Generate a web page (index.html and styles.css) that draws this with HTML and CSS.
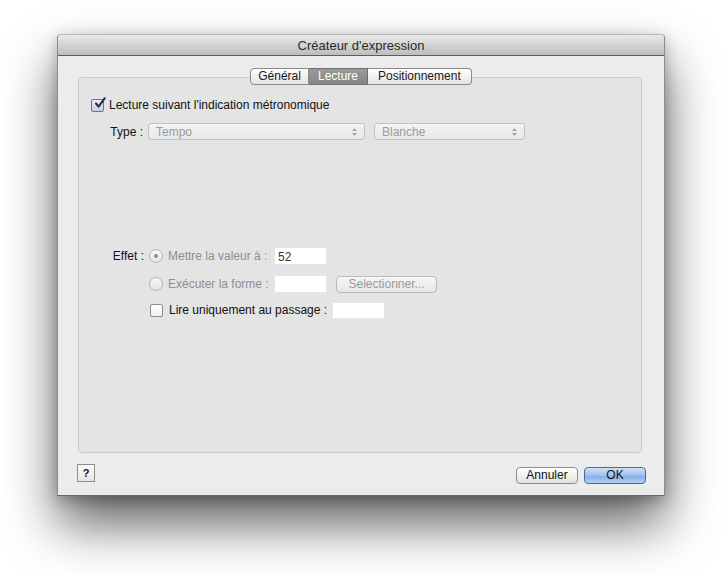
FILE: index.html
```html
<!DOCTYPE html>
<html lang="fr">
<head>
    <meta charset="UTF-8">
    <title>Créateur d'expression</title>
    <link rel="stylesheet" href="styles.css">
</head>
<body>
    <div class="window">
        <div class="titlebar">Créateur d'expression</div>
        <div class="window-body">
            <div class="tabs">
                <span class="tab">Général</span><span class="tab active">Lecture</span><span class="tab">Positionnement</span>
            </div>
            <div class="panel">
                <div class="check-row">
                    <span class="checkbox checked">
                        <svg width="13" height="13" viewBox="0 0 13 13"><path d="M3 6.5 L5.6 9.6 L11.8 1.2" fill="none" stroke="#1d2a44" stroke-width="2" stroke-linecap="round" stroke-linejoin="round"/></svg>
                    </span>
                    <span class="text">Lecture suivant l'indication métronomique</span>
                </div>

                <div class="form-row type-row">
                    <span class="label">Type :</span>
                    <div class="select wide">
                        <span>Tempo</span>
                        <svg width="5" height="8" viewBox="0 0 5 8"><path d="M0 3 L2.5 0 L5 3 Z M0 5 L2.5 8 L5 5 Z" fill="#a6a6a6"/></svg>
                    </div>
                    <div class="select narrow">
                        <span>Blanche</span>
                        <svg width="5" height="8" viewBox="0 0 5 8"><path d="M0 3 L2.5 0 L5 3 Z M0 5 L2.5 8 L5 5 Z" fill="#a6a6a6"/></svg>
                    </div>
                </div>

                <div class="form-row effect-row">
                    <span class="label">Effet :</span>
                    <div class="options">
                        <div class="option">
                            <span class="radio on"></span>
                            <span class="opt-text dim">Mettre la valeur à :</span>
                            <span class="field">52</span>
                        </div>
                        <div class="option second">
                            <span class="radio"></span>
                            <span class="opt-text dim">Exécuter la forme :</span>
                            <span class="field"></span>
                            <span class="btn disabled">Selectionner...</span>
                        </div>
                        <div class="option third">
                            <span class="checkbox small"></span>
                            <span class="opt-text free">Lire uniquement au passage :</span>
                            <span class="field"></span>
                        </div>
                    </div>
                </div>
            </div>

            <div class="footer">
                <span class="help">?</span>
                <div class="actions">
                    <span class="btn">Annuler</span>
                    <span class="btn default">OK</span>
                </div>
            </div>
        </div>
    </div>
</body>
</html>
```

FILE: styles.css
```css
body {
    margin: 0;
    min-height: 575px;
    background: #fff;
    font-family: "Lucida Grande", "Liberation Sans", sans-serif;
    font-size: 12px;
    color: #111;
}
.window {
    width: 606px;
    margin: 34px 0 0 57px;
    border: 1px solid #8d8d8d;
    border-top-color: #b9b9b9;
    border-bottom-color: #666;
    border-radius: 4px 4px 0 0;
    background: #ececec;
    box-shadow: 0 28px 52px rgba(0, 0, 0, 0.62), 0 4px 14px rgba(0, 0, 0, 0.25);
}
.titlebar {
    height: 20px;
    line-height: 21px;
    text-align: center;
    font-size: 13px;
    color: #2a2a2a;
    background: linear-gradient(#e9e9e9, #cfcfcf 60%, #bdbdbd);
    border-bottom: 1px solid #5c5c5c;
    border-radius: 4px 4px 0 0;
}
.window-body {
    padding: 12px 18px 11px 19px;
}
.tabs {
    display: flex;
    justify-content: center;
    position: relative;
    z-index: 1;
    height: 17px;
    margin: 0 4px -8px 1px;
    padding-left: 2px;
}
.tab {
    height: 15px;
    line-height: 15px;
    padding: 0 10px;
    border: 1px solid #8a8a8a;
    border-left: none;
    background: linear-gradient(#ffffff, #f1f1f1 50%, #e4e4e4);
    color: #1a1a1a;
}
.tab:first-child {
    border-left: 1px solid #8a8a8a;
    border-radius: 4px 0 0 4px;
    padding: 0 7px;
}
.tab:last-child {
    border-radius: 0 4px 4px 0;
}
.tab.active {
    background: linear-gradient(#9a9a9a, #858585);
    border-color: #6f6f6f;
    color: #fff;
    padding: 0 9px 0 9px;
}
.panel {
    height: 374px;
    margin: 0 4px 0 1px;
    border: 1px solid #cbcbcb;
    border-radius: 4px;
    background: #e4e4e4;
}
.check-row {
    display: flex;
    align-items: center;
    padding: 20px 0 0 12px;
}
.checkbox {
    width: 11px;
    height: 11px;
    border: 1px solid #8c8c8c;
    border-radius: 2px;
    background: linear-gradient(#ffffff, #ececec);
    position: relative;
    flex: none;
}
.checkbox.checked {
    background: linear-gradient(#e8eef8, #c6d0e0);
    border-color: #6c7484;
}
.checkbox svg {
    position: absolute;
    left: 1px;
    top: -3px;
}
.check-row .text {
    margin-left: 5px;
}
.form-row {
    display: flex;
}
.label {
    width: 64px;
    flex: none;
    text-align: right;
    margin-right: 5px;
}
.type-row {
    margin-top: 11px;
    align-items: center;
}
.select {
    display: flex;
    align-items: center;
    justify-content: space-between;
    height: 15px;
    padding: 0 7px 0 7px;
    border: 1px solid #c2c2c2;
    border-radius: 3px;
    background: linear-gradient(#f4f4f4, #e8e8e8);
    color: #9b9b9b;
    box-sizing: content-box;
}
.select.wide {
    width: 201px;
}
.select.narrow {
    width: 135px;
    margin-left: 9px;
}
.effect-row {
    margin-top: 107px;
}
.effect-row .label {
    margin-top: 2px;
    padding-left: 1px;
}
.options {
    display: flex;
    flex-direction: column;
}
.option {
    display: flex;
    align-items: center;
    height: 18px;
}
.option.second {
    margin-top: 10px;
}
.option.third {
    margin-top: 8px;
}
.option.third .field {
    height: 17px;
}
.radio {
    width: 12px;
    height: 12px;
    border: 1px solid #b4b4b4;
    border-radius: 50%;
    background: linear-gradient(#f6f6f6, #e6e6e6);
    position: relative;
    flex: none;
}
.radio.on::after {
    content: "";
    position: absolute;
    left: 4px;
    top: 4px;
    width: 4px;
    height: 4px;
    border-radius: 50%;
    background: #8a8a8a;
}
.checkbox.small {
    margin-left: 1px;
    margin-right: 1px;
    background: linear-gradient(#ffffff, #f0f0f0);
}
.opt-text {
    margin-left: 5px;
    width: 106px;
}
.opt-text.free {
    width: auto;
    margin-right: 5px;
}
.dim {
    color: #8e8e8e;
}
.field {
    padding-left: 3px;
    line-height: 18px;
    background: #fff;
    border: 1px solid #e6e6e6;
    box-sizing: border-box;
    width: 53px;
    height: 18px;
    color: #333;
}
.btn {
    display: inline-block;
    height: 15px;
    line-height: 15px;
    padding: 0 8px;
    border: 1px solid #8e8e8e;
    border-radius: 4px;
    background: linear-gradient(#ffffff, #f0f0f0 50%, #e2e2e2);
    text-align: center;
    color: #111;
}
.btn.disabled {
    margin-left: 9px;
    width: 83px;
    border-color: #b9b9b9;
    color: #9a9a9a;
    background: linear-gradient(#f6f6f6, #e6e6e6);
}
.footer {
    display: flex;
    justify-content: space-between;
    align-items: flex-end;
    margin-top: 11px;
    height: 20px;
}
.help {
    width: 16px;
    height: 16px;
    margin-bottom: 2px;
    border: 1px solid #8e8e8e;
    background: linear-gradient(#fafafa, #e6e6e6);
    text-align: center;
    line-height: 16px;
    font-weight: bold;
    font-size: 11px;
}
.actions {
    display: flex;
    gap: 6px;
}
.actions .btn {
    width: 44px;
}
.btn.default {
    border-color: #4a6a9e;
    background: linear-gradient(#cfe0f8, #9fc0ee 50%, #82abe8 51%, #b3d0f4);
}
```
